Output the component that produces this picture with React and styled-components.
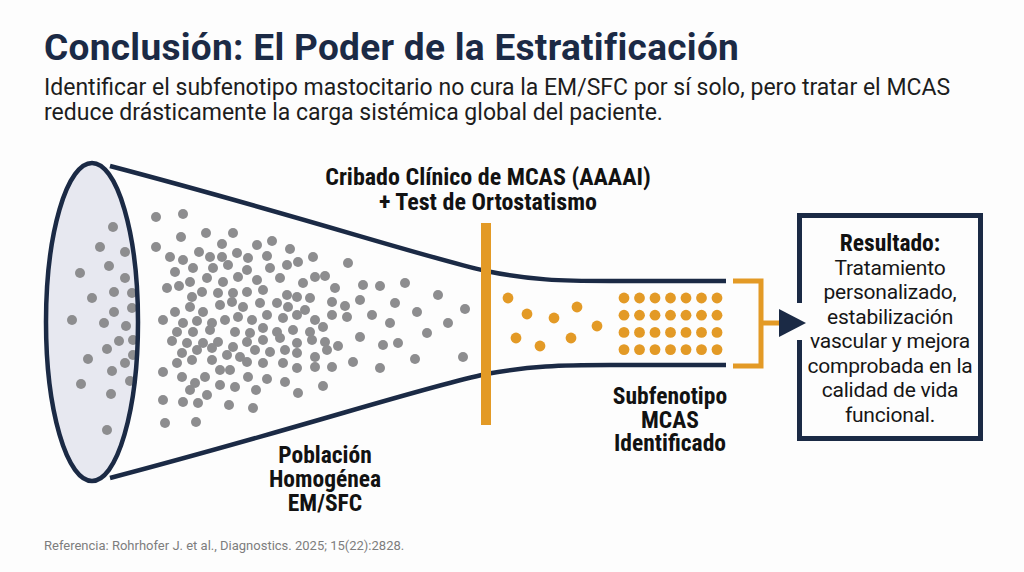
import React from 'react';
import styled, { createGlobalStyle } from 'styled-components';

const GlobalStyle = createGlobalStyle`
  html, body {
    margin: 0;
    padding: 0;
    background: #fdfdfd;
  }
  body {
    font-family: Roboto, 'Liberation Sans', sans-serif;
  }
`;

const NAVY = '#1b2a45';
const ORANGE = '#e39a26';
const GREY = '#8d8d8f';

const Page = styled.div`
  width: 1024px;
  height: 572px;
  display: flex;
  flex-direction: column;
  overflow: hidden;
`;

const Header = styled.header`
  padding: 28px 44px 0;
  display: flex;
  flex-direction: column;
  gap: 8px;
`;

const Title = styled.h1`
  margin: 0;
  font-family: Roboto, sans-serif;
  font-size: 37px;
  line-height: 40px;
  font-weight: 700;
  color: ${NAVY};
  letter-spacing: 0.3px;
`;

const Lead = styled.p`
  margin: 0;
  font-family: Roboto, sans-serif;
  font-size: 23px;
  line-height: 24.5px;
  color: #1d1d1d;
`;

const DiagramRow = styled.section`
  margin-top: 25px;
  display: flex;
  align-items: flex-start;
`;

const Canvas = styled.div`
  position: relative;
  width: 797px;
  height: 372px;
  flex-shrink: 0;

  svg {
    display: block;
    overflow: visible;
  }
`;

const Label = styled.div`
  position: absolute;
  left: ${p => p.x}px;
  top: ${p => p.y}px;
  transform: translateX(-50%);
  white-space: nowrap;
  text-align: center;
  font-family: 'Roboto Condensed', Roboto, sans-serif;
  font-weight: 700;
  font-size: ${p => p.size || 23.5}px;
  line-height: ${p => p.lh || 24}px;
  color: #121212;
`;

const ResultBox = styled.div`
  position: relative;
  margin-top: 63px;
  width: 186px;
  height: 228px;
  box-sizing: border-box;
  border: 5px solid ${NAVY};
  border-left: none;
  padding: 4px 0 0 5px;
  display: flex;
  flex-direction: column;
  align-items: center;
  justify-content: center;
  text-align: center;
  font-family: Roboto, sans-serif;
  font-size: 21px;
  line-height: 24.5px;
  letter-spacing: -0.2px;
  color: #161616;
  white-space: nowrap;

  &::before,
  &::after {
    content: '';
    position: absolute;
    left: 0;
    width: 5px;
    background: ${NAVY};
  }
  &::before {
    top: -5px;
    height: 90px;
  }
  &::after {
    bottom: -5px;
    height: 101px;
  }
`;

const ResultHead = styled.strong`
  font-family: 'Roboto Condensed', Roboto, sans-serif;
  font-weight: 700;
  font-size: 23.5px;
  letter-spacing: 0;
  color: #111;
`;

const Footer = styled.footer`
  margin-top: 16px;
  padding: 0 44px;
  font-family: Roboto, sans-serif;
  font-size: 13px;
  line-height: 16px;
  color: #7d7d7d;
`;

const innerDots = [
  [113, 227], [100, 247], [125, 252], [109, 266], [80, 273], [125, 278],
  [114, 292], [92, 298], [132, 293], [114, 312], [132, 308], [72, 320],
  [104, 323], [126, 326], [119, 341], [107, 349], [133, 340], [88, 359],
  [125, 363], [112, 371], [130, 381], [81, 384], [111, 394], [107, 430],
  [133, 355],
];

const coneDots = [
  [156, 217], [183, 214], [156, 247], [181, 237], [206, 233], [233, 233],
  [222, 244], [199, 252], [170, 257], [183, 260], [210, 257], [222, 257],
  [237, 253], [257, 245], [272, 241], [267, 256], [290, 249], [313, 257],
  [348, 263], [175, 272], [193, 268], [213, 268], [228, 265], [248, 258],
  [247, 270], [270, 268], [287, 265], [298, 262], [167, 288], [179, 286],
  [190, 282], [207, 278], [223, 282], [238, 277], [257, 280], [280, 278],
  [303, 283], [315, 277], [325, 276], [192, 297], [202, 292], [218, 293],
  [233, 293], [247, 292], [263, 290], [287, 295], [297, 297], [310, 298],
  [335, 288], [363, 285], [380, 286], [405, 283], [438, 295], [175, 312],
  [190, 307], [203, 312], [220, 305], [232, 302], [243, 307], [260, 303],
  [277, 303], [288, 307], [305, 310], [332, 302], [345, 306], [360, 300],
  [395, 303], [465, 309], [163, 320], [183, 323], [197, 321], [212, 323],
  [225, 320], [238, 317], [252, 320], [267, 315], [283, 318], [297, 315],
  [315, 320], [332, 315], [347, 317], [372, 315], [417, 312], [390, 323],
  [448, 323], [177, 332], [193, 332], [210, 330], [235, 332], [250, 333],
  [263, 328], [277, 332], [293, 330], [310, 332], [323, 327], [360, 337],
  [427, 333], [172, 341], [187, 343], [203, 343], [218, 342], [233, 347],
  [247, 342], [263, 340], [280, 338], [297, 343], [312, 340], [325, 342],
  [338, 346], [383, 345], [398, 343], [182, 353], [197, 350], [212, 348],
  [227, 355], [240, 357], [255, 350], [270, 352], [285, 350], [297, 353],
  [315, 357], [327, 350], [177, 363], [192, 360], [212, 360], [230, 370],
  [247, 362], [263, 363], [283, 363], [297, 368], [315, 367], [332, 367],
  [353, 362], [380, 368], [415, 359], [463, 357], [163, 372], [182, 377],
  [195, 383], [205, 377], [220, 385], [235, 387], [248, 377], [267, 379],
  [285, 382], [298, 393], [323, 386], [190, 390], [207, 395], [220, 370],
  [256, 390], [163, 400], [183, 402], [198, 403], [229, 405], [253, 408],
  [165, 423], [196, 422],
];

const looseOrange = [
  [508, 298], [527, 314], [554, 318], [577, 307], [597, 326],
  [516, 338], [540, 346], [571, 338],
];

const gridOrange = [];
for (let r = 0; r < 4; r++) {
  for (let c = 0; c < 7; c++) {
    gridOrange.push([624 + c * 15.5, 298 + r * 17.2]);
  }
}

function Funnel() {
  return (
    <svg width="797" height="372" viewBox="0 150 797 372">
      <path
        d="M110 166 C 300 216, 420 256, 486 271 C 530 280, 560 281, 610 281 L 726 281"
        fill="none"
        stroke={NAVY}
        strokeWidth="4.5"
      />
      <path
        d="M110 478 C 300 428, 420 388, 486 374 C 530 366, 560 365, 610 365 L 726 365"
        fill="none"
        stroke={NAVY}
        strokeWidth="4.5"
      />
      <ellipse cx="92" cy="322" rx="46" ry="159" fill="#e7e8f0" />
      {innerDots.concat(coneDots).map(([x, y], i) => (
        <circle key={`g${i}`} cx={x} cy={y} r="5" fill={GREY} />
      ))}
      <ellipse cx="92" cy="322" rx="46" ry="159" fill="none" stroke={NAVY} strokeWidth="4.5" />
      <rect x="481" y="223" width="10" height="202" fill={ORANGE} />
      {looseOrange.concat(gridOrange).map(([x, y], i) => (
        <circle key={`o${i}`} cx={x} cy={y} r="5.4" fill={ORANGE} />
      ))}
      <path
        d="M733 281 H761 V366 H733 M761 323 H782"
        fill="none"
        stroke={ORANGE}
        strokeWidth="5"
      />
      <polygon points="779,309 806,323 779,337" fill={NAVY} />
    </svg>
  );
}

export default function App() {
  return (
    <>
      <GlobalStyle />
      <Page>
        <Header>
          <Title>Conclusión: El Poder de la Estratificación</Title>
          <Lead>
            Identificar el subfenotipo mastocitario no cura la EM/SFC por sí solo, pero tratar el MCAS
            <br />
            reduce drásticamente la carga sistémica global del paciente.
          </Lead>
        </Header>

        <DiagramRow>
          <Canvas>
            <Funnel />
            <Label x={488} y={15} size={24} lh={25}>
              Cribado Clínico de MCAS (AAAAI)
              <br />
              + Test de Ortostatismo
            </Label>
            <Label x={325} y={293}>
              Población
              <br />
              Homogénea
              <br />
              EM/SFC
            </Label>
            <Label x={670} y={235} lh={23.5}>
              Subfenotipo
              <br />
              MCAS
              <br />
              Identificado
            </Label>
          </Canvas>

          <ResultBox>
            <ResultHead>Resultado:</ResultHead>
            <span>Tratamiento</span>
            <span>personalizado,</span>
            <span>estabilización</span>
            <span>vascular y mejora</span>
            <span>comprobada en la</span>
            <span>calidad de vida</span>
            <span>funcional.</span>
          </ResultBox>
        </DiagramRow>

        <Footer>Referencia: Rohrhofer J. et al., Diagnostics. 2025; 15(22):2828.</Footer>
      </Page>
    </>
  );
}
